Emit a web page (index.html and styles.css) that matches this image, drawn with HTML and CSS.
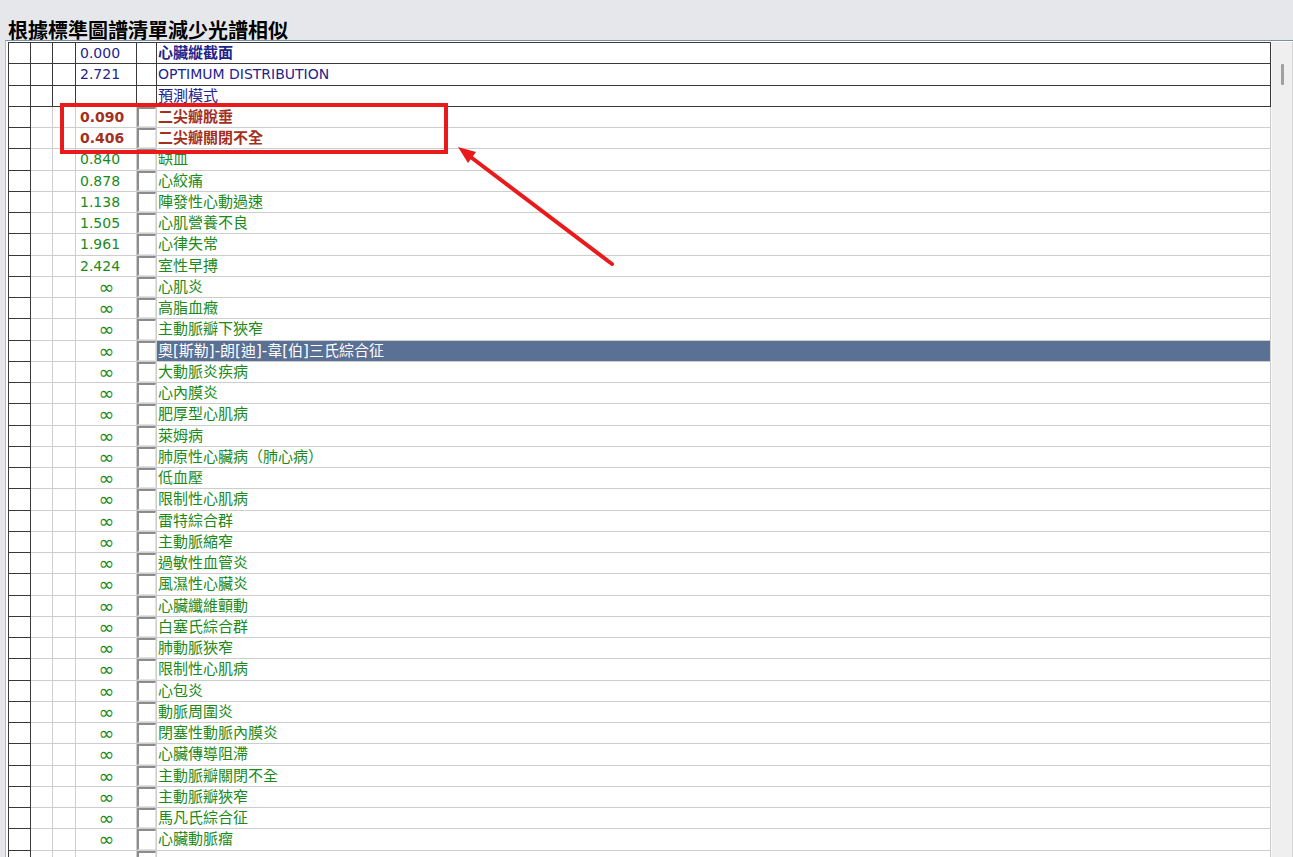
FILE: index.html
```html
<!DOCTYPE html>
<html lang="zh-Hant">
<head>
<meta charset="utf-8">
<title>根據標準圖譜清單減少光譜相似</title>
<link rel="stylesheet" href="styles.css">
</head>
<body>
<div class="header"><h1 class="title">根據標準圖譜清單減少光譜相似</h1></div>
<div class="panel">
  <div class="grid">
    <div class="row top"><div class="c"></div><div class="c"></div><div class="c"></div><div class="c val navy">0.000</div><div class="c"></div><div class="c name navy b">心臟縱截面</div></div>
    <div class="row top"><div class="c"></div><div class="c"></div><div class="c"></div><div class="c val navy">2.721</div><div class="c"></div><div class="c name navy"><span class="latin">OPTIMUM DISTRIBUTION</span></div></div>
    <div class="row top"><div class="c"></div><div class="c"></div><div class="c"></div><div class="c val navy"></div><div class="c"></div><div class="c name navy">預測模式</div></div>
    <div class="row"><div class="c c1"></div><div class="c"></div><div class="c"></div><div class="c val red b">0.090</div><div class="c chk"><span class="box"></span></div><div class="c name red b">二尖瓣脫垂</div></div>
    <div class="row"><div class="c c1"></div><div class="c"></div><div class="c"></div><div class="c val red b">0.406</div><div class="c chk"><span class="box"></span></div><div class="c name red b">二尖瓣關閉不全</div></div>
    <div class="row"><div class="c c1"></div><div class="c"></div><div class="c"></div><div class="c val green">0.840</div><div class="c chk"><span class="box"></span></div><div class="c name green">缺血</div></div>
    <div class="row"><div class="c c1"></div><div class="c"></div><div class="c"></div><div class="c val green">0.878</div><div class="c chk"><span class="box"></span></div><div class="c name green">心絞痛</div></div>
    <div class="row"><div class="c c1"></div><div class="c"></div><div class="c"></div><div class="c val green">1.138</div><div class="c chk"><span class="box"></span></div><div class="c name green">陣發性心動過速</div></div>
    <div class="row"><div class="c c1"></div><div class="c"></div><div class="c"></div><div class="c val green">1.505</div><div class="c chk"><span class="box"></span></div><div class="c name green">心肌營養不良</div></div>
    <div class="row"><div class="c c1"></div><div class="c"></div><div class="c"></div><div class="c val green">1.961</div><div class="c chk"><span class="box"></span></div><div class="c name green">心律失常</div></div>
    <div class="row"><div class="c c1"></div><div class="c"></div><div class="c"></div><div class="c val green">2.424</div><div class="c chk"><span class="box"></span></div><div class="c name green">室性早搏</div></div>
    <div class="row"><div class="c c1"></div><div class="c"></div><div class="c"></div><div class="c val green inf">∞</div><div class="c chk"><span class="box"></span></div><div class="c name green">心肌炎</div></div>
    <div class="row"><div class="c c1"></div><div class="c"></div><div class="c"></div><div class="c val green inf">∞</div><div class="c chk"><span class="box"></span></div><div class="c name green">高脂血癥</div></div>
    <div class="row"><div class="c c1"></div><div class="c"></div><div class="c"></div><div class="c val green inf">∞</div><div class="c chk"><span class="box"></span></div><div class="c name green">主動脈瓣下狹窄</div></div>
    <div class="row"><div class="c c1"></div><div class="c"></div><div class="c"></div><div class="c val green inf">∞</div><div class="c chk"><span class="box"></span></div><div class="c name sel">奧[斯勒]-朗[迪]-韋[伯]三氏綜合征</div></div>
    <div class="row"><div class="c c1"></div><div class="c"></div><div class="c"></div><div class="c val green inf">∞</div><div class="c chk"><span class="box"></span></div><div class="c name green">大動脈炎疾病</div></div>
    <div class="row"><div class="c c1"></div><div class="c"></div><div class="c"></div><div class="c val green inf">∞</div><div class="c chk"><span class="box"></span></div><div class="c name green">心內膜炎</div></div>
    <div class="row"><div class="c c1"></div><div class="c"></div><div class="c"></div><div class="c val green inf">∞</div><div class="c chk"><span class="box"></span></div><div class="c name green">肥厚型心肌病</div></div>
    <div class="row"><div class="c c1"></div><div class="c"></div><div class="c"></div><div class="c val green inf">∞</div><div class="c chk"><span class="box"></span></div><div class="c name green">萊姆病</div></div>
    <div class="row"><div class="c c1"></div><div class="c"></div><div class="c"></div><div class="c val green inf">∞</div><div class="c chk"><span class="box"></span></div><div class="c name green">肺原性心臟病（肺心病）</div></div>
    <div class="row"><div class="c c1"></div><div class="c"></div><div class="c"></div><div class="c val green inf">∞</div><div class="c chk"><span class="box"></span></div><div class="c name green">低血壓</div></div>
    <div class="row"><div class="c c1"></div><div class="c"></div><div class="c"></div><div class="c val green inf">∞</div><div class="c chk"><span class="box"></span></div><div class="c name green">限制性心肌病</div></div>
    <div class="row"><div class="c c1"></div><div class="c"></div><div class="c"></div><div class="c val green inf">∞</div><div class="c chk"><span class="box"></span></div><div class="c name green">雷特綜合群</div></div>
    <div class="row"><div class="c c1"></div><div class="c"></div><div class="c"></div><div class="c val green inf">∞</div><div class="c chk"><span class="box"></span></div><div class="c name green">主動脈縮窄</div></div>
    <div class="row"><div class="c c1"></div><div class="c"></div><div class="c"></div><div class="c val green inf">∞</div><div class="c chk"><span class="box"></span></div><div class="c name green">過敏性血管炎</div></div>
    <div class="row"><div class="c c1"></div><div class="c"></div><div class="c"></div><div class="c val green inf">∞</div><div class="c chk"><span class="box"></span></div><div class="c name green">風濕性心臟炎</div></div>
    <div class="row"><div class="c c1"></div><div class="c"></div><div class="c"></div><div class="c val green inf">∞</div><div class="c chk"><span class="box"></span></div><div class="c name green">心臟纖維顫動</div></div>
    <div class="row"><div class="c c1"></div><div class="c"></div><div class="c"></div><div class="c val green inf">∞</div><div class="c chk"><span class="box"></span></div><div class="c name green">白塞氏綜合群</div></div>
    <div class="row"><div class="c c1"></div><div class="c"></div><div class="c"></div><div class="c val green inf">∞</div><div class="c chk"><span class="box"></span></div><div class="c name green">肺動脈狹窄</div></div>
    <div class="row"><div class="c c1"></div><div class="c"></div><div class="c"></div><div class="c val green inf">∞</div><div class="c chk"><span class="box"></span></div><div class="c name green">限制性心肌病</div></div>
    <div class="row"><div class="c c1"></div><div class="c"></div><div class="c"></div><div class="c val green inf">∞</div><div class="c chk"><span class="box"></span></div><div class="c name green">心包炎</div></div>
    <div class="row"><div class="c c1"></div><div class="c"></div><div class="c"></div><div class="c val green inf">∞</div><div class="c chk"><span class="box"></span></div><div class="c name green">動脈周圍炎</div></div>
    <div class="row"><div class="c c1"></div><div class="c"></div><div class="c"></div><div class="c val green inf">∞</div><div class="c chk"><span class="box"></span></div><div class="c name green">閉塞性動脈內膜炎</div></div>
    <div class="row"><div class="c c1"></div><div class="c"></div><div class="c"></div><div class="c val green inf">∞</div><div class="c chk"><span class="box"></span></div><div class="c name green">心臟傳導阻滯</div></div>
    <div class="row"><div class="c c1"></div><div class="c"></div><div class="c"></div><div class="c val green inf">∞</div><div class="c chk"><span class="box"></span></div><div class="c name green">主動脈瓣關閉不全</div></div>
    <div class="row"><div class="c c1"></div><div class="c"></div><div class="c"></div><div class="c val green inf">∞</div><div class="c chk"><span class="box"></span></div><div class="c name green">主動脈瓣狹窄</div></div>
    <div class="row"><div class="c c1"></div><div class="c"></div><div class="c"></div><div class="c val green inf">∞</div><div class="c chk"><span class="box"></span></div><div class="c name green">馬凡氏綜合征</div></div>
    <div class="row"><div class="c c1"></div><div class="c"></div><div class="c"></div><div class="c val green inf">∞</div><div class="c chk"><span class="box"></span></div><div class="c name green">心臟動脈瘤</div></div>
    <div class="row"><div class="c c1"></div><div class="c"></div><div class="c"></div><div class="c val green inf"></div><div class="c chk"><span class="box"></span></div><div class="c name green"></div></div>
  </div>
  <div class="scroll"><div class="thumb"></div></div>
</div>
<svg class="annot" width="1293" height="857" viewBox="0 0 1293 857" aria-hidden="true">
  <rect x="62" y="105" width="384" height="47" fill="none" stroke="#ea1a1a" stroke-width="4"/>
  <line x1="612" y1="264" x2="468" y2="155" stroke="#ea1a1a" stroke-width="4" stroke-linecap="round"/>
  <polygon points="458,147 476,152 468,163" fill="#ea1a1a"/>
</svg>
</body>
</html>
```
FILE: styles.css
```css
html, body {
  margin: 0;
  padding: 0;
}
body {
  width: 1293px;
  height: 857px;
  overflow: hidden;
  position: relative;
  background: #e6e7ea;
}
.header {
  height: 40px;
  box-sizing: border-box;
  padding: 20px 0 0 8px;
}
.title {
  margin: 0;
  font-family: "Noto Sans CJK TC", sans-serif;
  font-size: 20px;
  line-height: 20px;
  font-weight: bold;
  color: #000;
  letter-spacing: 0;
}
.panel {
  display: flex;
  margin-left: 5px;
  border-top: 1px solid #7591ab;
  border-left: 1px solid #a9bccd;
  padding-top: 1px;
  padding-left: 2px;
  background: #ffffff;
  height: 900px;
}
.grid {
  width: 1263px;
  flex: none;
  border-left: 1px solid #3a3a3a;
  border-top: 1px solid #3a3a3a;
  box-sizing: border-box;
  font-family: "DejaVu Sans", "Noto Sans CJK TC", sans-serif;
  font-size: 14px;
  background: #fff;
}
.row {
  display: grid;
  grid-template-columns: 22px 22px 23px 61px 20px 1114px;
  height: 21.25px;
}
.c {
  box-sizing: border-box;
  border-right: 1px solid #cdcdcd;
  border-bottom: 1px solid #cdcdcd;
  overflow: hidden;
  white-space: nowrap;
  line-height: 20px;
}
.c1 {
  border-color: #3a3a3a;
}
.row.top .c {
  border-color: #3a3a3a;
}
.val {
  padding-left: 4px;
}
.val.inf {
  text-align: center;
  padding-left: 1px;
  font-size: 19px;
  line-height: 21px;
}
.name {
  font-size: 15px;
  padding-left: 1px;
}
.latin {
  font-size: 14px;
}
.b {
  font-weight: bold;
}
.navy {
  color: #23238d;
}
.red {
  color: #a3301d;
}
.green {
  color: #1b8a1b;
}
.sel {
  background: #5a7095;
  color: #ffffff;
}
.chk {
  display: flex;
}
.box {
  display: block;
  width: 19px;
  height: 100%;
  box-sizing: border-box;
  border-left: 2px solid #8c8c8c;
  border-top: 2px solid #8c8c8c;
  border-right: 1px solid #e2e2e2;
  border-bottom: 1px solid #e2e2e2;
  background: #fff;
}
.scroll {
  width: 22px;
  flex: none;
  box-sizing: border-box;
  background: #efefef;
  border-left: 1px solid #f8f8f8;
  border-right: 1px solid #d6d6d6;
  padding: 22px 0 0 9px;
}
.thumb {
  width: 3px;
  height: 21px;
  background: #a0a0a0;
  border-radius: 1px;
}
.annot {
  position: absolute;
  left: 0;
  top: 0;
  pointer-events: none;
}
```
